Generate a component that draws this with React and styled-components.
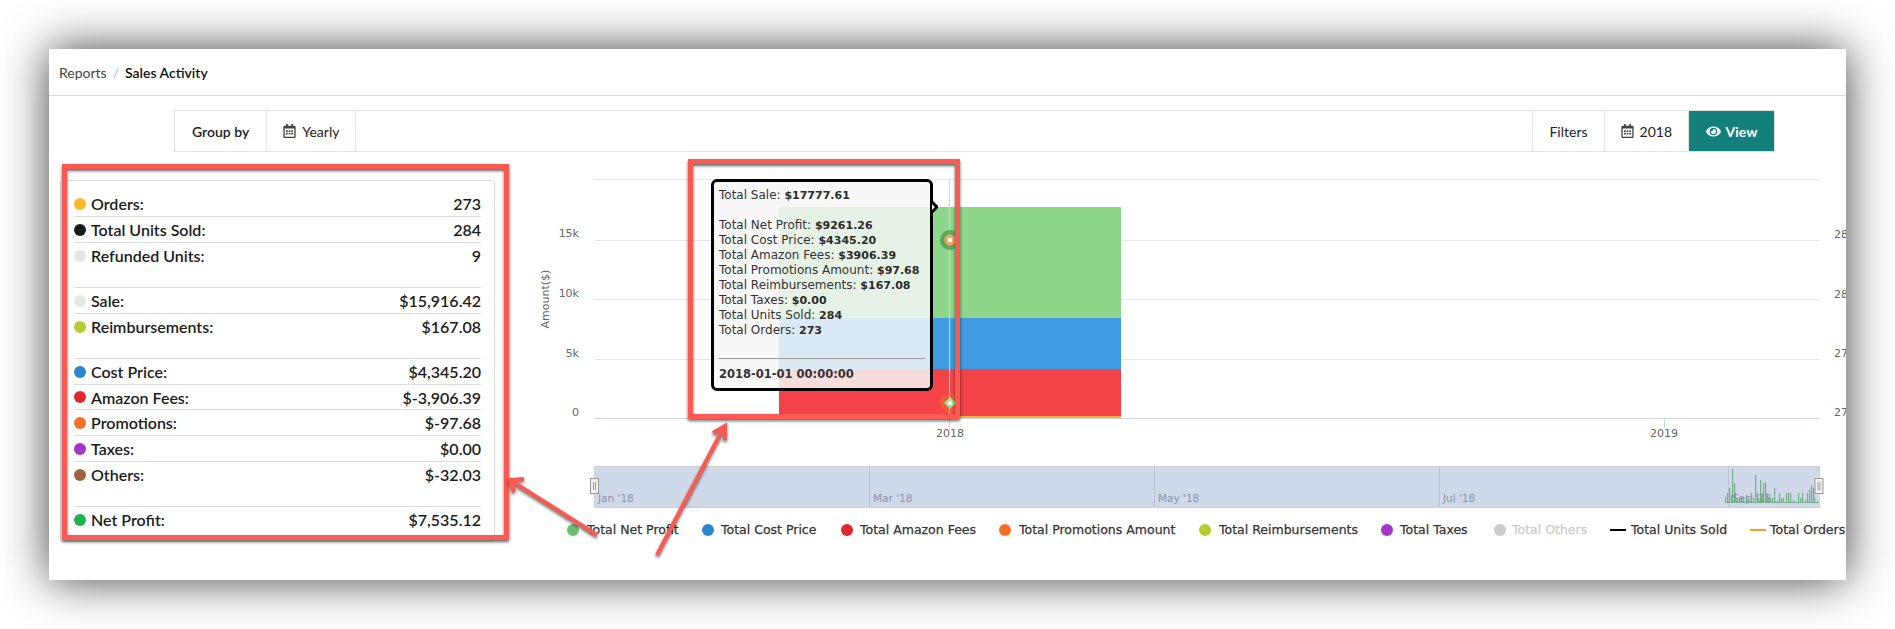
import React from "react";
import styled, { createGlobalStyle } from "styled-components";
import { FaRegCalendarAlt, FaEye } from "react-icons/fa";

const GlobalStyle = createGlobalStyle`
    body {
        margin: 0;
        background: #fff;
        font-family: "Lato", "Liberation Sans", sans-serif;
        color: #222;
    }
`

const statGroups = [
    [
        { label: "Orders:", value: "273", color: "#fdb827" },
        { label: "Total Units Sold:", value: "284", color: "#1b1b1e" },
        { label: "Refunded Units:", value: "9", color: "#e6e6e6" },
    ],
    [
        { label: "Sale:", value: "$15,916.42", color: "#e6e6e6" },
        { label: "Reimbursements:", value: "$167.08", color: "#b5cc2e" },
    ],
    [
        { label: "Cost Price:", value: "$4,345.20", color: "#2a86d1" },
        { label: "Amazon Fees:", value: "$-3,906.39", color: "#e0262f", tight: true },
        { label: "Promotions:", value: "$-97.68", color: "#f5702b" },
        { label: "Taxes:", value: "$0.00", color: "#a336c9" },
        { label: "Others:", value: "$-32.03", color: "#9f6340" },
    ],
    [
        { label: "Net Profit:", value: "$7,535.12", color: "#21b34d" },
    ],
];

const tooltipLines = [
    ["Total Net Profit", "$9261.26"],
    ["Total Cost Price", "$4345.20"],
    ["Total Amazon Fees", "$3906.39"],
    ["Total Promotions Amount", "$97.68"],
    ["Total Reimbursements", "$167.08"],
    ["Total Taxes", "$0.00"],
    ["Total Units Sold", "284"],
    ["Total Orders", "273"],
];

const legendItems = [
    { label: "Total Net Profit", mark: 573, text: 587, color: "#6cbf72" },
    { label: "Total Cost Price", mark: 708, text: 721, color: "#2a86d1" },
    { label: "Total Amazon Fees", mark: 847, text: 860, color: "#e0262f" },
    { label: "Total Promotions Amount", mark: 1005, text: 1019, color: "#f5702b" },
    { label: "Total Reimbursements", mark: 1205, text: 1219, color: "#b5cc2e" },
    { label: "Total Taxes", mark: 1387, text: 1400, color: "#a336c9" },
    { label: "Total Others", mark: 1500, text: 1512, color: "#cccccc", off: true },
    { label: "Total Units Sold", mark: 1618, text: 1631, color: "#000", line: true },
    { label: "Total Orders", mark: 1758, text: 1770, color: "#f7a024", line: true },
];

// [x offset from the left of the zoom, height of the spike]
const spikes = [
    [10, 5], [12, 9], [14, 14], [16, 7], [17, 33], [19, 19], [20, 9], [22, 4], [24, 5], [26, 5],
    [28, 4], [31, 7], [33, 4], [36, 9], [38, 4], [40, 27], [42, 9], [43, 4], [45, 22], [47, 9],
    [48, 19], [50, 20], [52, 9], [53, 5], [55, 4], [57, 4], [59, 14], [62, 2], [64, 9], [66, 4],
    [68, 4], [71, 9], [73, 9], [75, 9], [78, 2], [83, 9], [85, 4], [87, 9], [90, 2], [92, 9],
    [94, 12], [96, 17], [98, 14], [99, 4], [102, 1],
];

const Page = styled.div`
    box-sizing: border-box;
    height: 629px;
    padding: 49px 49px 0 49px;
    overflow: hidden;
`

const Window = styled.div`
    position: relative;
    width: 1797px;
    height: 531px;
    background: #fff;
    box-shadow: 0 0 44px rgba(0, 0, 0, 0.75);
    overflow: hidden;
`

const Header = styled.div`
    display: flex;
    align-items: center;
    gap: 6px;
    height: 46px;
    padding-left: 10px;
    border-bottom: 1px solid #d9d9d9;
    font-size: 14px;
`

const Crumb = styled.span`
    color: ${props => props.$current ? "#111" : "#444"};
    font-weight: ${props => props.$current ? 600 : 400};
`

const CrumbSep = styled.span`
    color: #bbb;
`

const Toolbar = styled.div`
    display: flex;
    height: 40px;
    margin: 14px 71px 0 125px;
    border: 1px solid #e0e0e0;
    font-size: 14px;
`

const ToolCell = styled.div`
    display: flex;
    align-items: center;
    gap: 6px;
    padding: 0 ${props => props.$pad || 15}px;
    border-right: 1px solid #e6e6e6;
    color: #222;
    font-weight: ${props => props.$bold ? 600 : 400};
`

const ToolSpacer = styled.div`
    flex: 1;
    border-right: 1px solid #e6e6e6;
`

const ViewButton = styled.div`
    display: flex;
    align-items: center;
    gap: 5px;
    width: 85px;
    justify-content: center;
    background: #14807c;
    color: #fff;
    font-weight: 700;
`

const CalIcon = styled(FaRegCalendarAlt)`
    width: 13px;
    height: 14px;
    color: #444;
`

const Body = styled.div`
    display: flex;
    height: 428px;
`

const StatCard = styled.div`
    box-sizing: border-box;
    width: 435px;
    height: 362px;
    margin: 28px 0 0 11px;
    padding: 10px 13px 0 13px;
    border: 1px solid #ddd;
    border-radius: 3px;
    flex-shrink: 0;
`

const StatGroup = styled.div`
    & + & {
        margin-top: 19px;
        border-top: 1px solid #ddd;
    }
`

const StatRow = styled.div`
    display: flex;
    align-items: center;
    height: ${props => props.$tight ? 24 : 25}px;
    border-bottom: 1px solid #ddd;
    font-size: 16px;
    font-weight: 600;
    color: #1c1c1c;

    &:last-child {
        border-bottom: none;
    }
`

const Dot = styled.span`
    width: 12px;
    height: 12px;
    margin-right: 5px;
    border-radius: 50%;
    background: ${props => props.$color};
`

const StatValue = styled.span`
    margin-left: auto;
`

const ChartCol = styled.div`
    position: relative;
    flex: 1;
`

const ChartSvg = styled.svg`
    display: block;
    font-family: "DejaVu Sans", sans-serif;
`

const LegendLabel = styled.text`
    font-size: 12.5px;
    stroke: currentColor;
    stroke-width: 0.25px;
    fill: currentColor;
    color: ${props => props.$off ? "#ccc" : "#333"};
`

const Tooltip = styled.div`
    position: absolute;
    left: 216px;
    top: 27px;
    box-sizing: border-box;
    width: 222px;
    height: 212px;
    padding: 6px 5px 0 5px;
    background: rgba(247, 247, 247, 0.85);
    border: 3px solid #000;
    border-radius: 6px;
    font-family: "DejaVu Sans", sans-serif;
    font-size: 12px;
    line-height: 15px;
    color: #333;

    b {
        font-size: 11px;
        font-weight: 700;
        color: #2b2b2b;
    }
`

const TipArrow = styled.svg`
    position: absolute;
    left: 431px;
    top: 49px;
`

const TipGap = styled.div`
    height: 15px;
`

const TipRule = styled.div`
    height: 1px;
    margin-top: 20px;
    background: #999;
`

const TipDate = styled.div`
    margin-top: 8px;
    font-size: 11.5px;
    font-weight: 700;
`

const Highlight = styled.div`
    position: absolute;
    left: ${props => props.$left}px;
    top: ${props => props.$top}px;
    width: ${props => props.$width}px;
    height: ${props => props.$height}px;
    box-sizing: border-box;
    border: 5px solid #fb5a52;
    box-shadow: 0 2px 3px rgba(0, 0, 0, 0.6), inset 0 2px 3px rgba(0, 0, 0, 0.6);
`

const ArrowLayer = styled.svg`
    position: absolute;
    left: 0;
    top: 0;
    pointer-events: none;
    filter: drop-shadow(0 2px 1.5px rgba(0, 0, 0, 0.55));
`

const Marker = ({ x, y, halo, fill, diamond }) => (
    <g>
        <circle cx={x} cy={y} r={10} fill={halo} fillOpacity={0.45} />
        {diamond
            ? <polygon points={`${x},${y - 6} ${x + 6},${y} ${x},${y + 6} ${x - 6},${y}`} fill={fill} />
            : <circle cx={x} cy={y} r={5.5} fill={fill} />}
        <rect x={x - 2} y={y - 2} width={4} height={4} fill="#fff" />
    </g>
)

const Chart = () => {
    const grid = [179, 240, 299, 359];
    const axisLeft = [["15k", 237], ["10k", 297], ["5k", 357], ["0", 416]];
    const axisRight = [["28", 238], ["28", 298], ["27", 357], ["27", 416]];
    const navTicks = [
        [594, "Jan '18"], [869, "Mar '18"], [1154, "May '18"], [1439, "Jul '18"], [1728, "Sep '18"],
    ];

    return (
        <ChartSvg width="1351" height="428" viewBox="495 152 1351 428">
            {grid.map(y => <rect key={y} x="594" y={y} width="1225" height="1" fill="#e6e6e6" />)}
            <rect x="594" y="418" width="1225" height="1" fill="#ccd6eb" />

            {axisLeft.map(([t, y]) => (
                <text key={t} x="579" y={y} fontSize="11" fill="#666" textAnchor="end">{t}</text>
            ))}
            {axisRight.map(([t, y], i) => (
                <text key={i} x="1834" y={y} fontSize="11" fill="#666">{t}</text>
            ))}
            <text x="0" y="0" fontSize="11" fill="#666" textAnchor="middle" transform="translate(549 299) rotate(-90)">Amount($)</text>

            <rect x="779" y="207" width="342" height="111" fill="#8ed68c" />
            <rect x="779" y="318" width="342" height="51" fill="#409ce4" />
            <rect x="779" y="369" width="342" height="47" fill="#f44348" />
            <rect x="779" y="416" width="342" height="2" fill="#f2b035" />

            <rect x="949" y="179" width="1" height="251" fill="#ccd6eb" />
            <rect x="1664" y="418" width="1" height="10" fill="#ccd6eb" />
            <text x="950" y="437" fontSize="11" fill="#666" textAnchor="middle">2018</text>
            <text x="1664" y="437" fontSize="11" fill="#666" textAnchor="middle">2019</text>

            <Marker x={950} y={240} halo="#1f6b22" fill="#f9a35c" />
            <Marker x={950} y={403} halo="#f5702b" fill="#8fe58c" diamond />

            <rect x="594.5" y="466.5" width="1225" height="41" fill="#d0d9ea" stroke="#cfcfcf" />
            {navTicks.slice(1).map(([x]) => <rect key={x} x={x} y="467" width="1" height="40" fill="#bcc5d8" />)}
            {spikes.map(([dx, h]) => (
                <rect key={dx} x={1725 + dx - 10} y={502 - h} width="1.2" height={h + 1} fill="#74b086" />
            ))}
            <rect x="1725" y="502" width="92" height="1" fill="#74b086" />
            {navTicks.map(([x, t]) => (
                <text key={t} x={x + 4} y="502" fontSize="10.5" fill="#8c93aa">{t}</text>
            ))}
            {[594.5, 1819].map(x => (
                <g key={x}>
                    <rect x={x - 4} y="478.5" width="8" height="15" fill="#f2f2f2" stroke="#999" />
                    <path d={`M${x - 1} 482v8M${x + 1} 482v8`} stroke="#999" fill="none" />
                </g>
            ))}

            {legendItems.map(item => (
                <g key={item.label}>
                    {item.line
                        ? <rect x={item.mark - 8} y="529" width="16" height="2" fill={item.color} />
                        : <circle cx={item.mark} cy="530" r="6" fill={item.color} />}
                    <LegendLabel x={item.text} y="534" $off={item.off}>{item.label}</LegendLabel>
                </g>
            ))}
        </ChartSvg>
    )
}

const App = () => {
    return (
        <Page>
            <GlobalStyle />
            <Window>
                <Header>
                    <Crumb>Reports</Crumb>
                    <CrumbSep>/</CrumbSep>
                    <Crumb $current>Sales Activity</Crumb>
                </Header>
                <Toolbar>
                    <ToolCell $bold $pad={17}>Group by</ToolCell>
                    <ToolCell $pad={16}><CalIcon />Yearly</ToolCell>
                    <ToolSpacer />
                    <ToolCell $pad={16}>Filters</ToolCell>
                    <ToolCell $pad={16}><CalIcon />2018</ToolCell>
                    <ViewButton><FaEye size={15} />View</ViewButton>
                </Toolbar>
                <Body>
                    <StatCard>
                        {statGroups.map((group, i) => (
                            <StatGroup key={i}>
                                {group.map(row => (
                                    <StatRow key={row.label} $tight={row.tight}>
                                        <Dot $color={row.color} />
                                        {row.label}
                                        <StatValue>{row.value}</StatValue>
                                    </StatRow>
                                ))}
                            </StatGroup>
                        ))}
                    </StatCard>
                    <ChartCol>
                        <Chart />
                        <Tooltip>
                            <div>Total Sale: <b>$17777.61</b></div>
                            <TipGap />
                            {tooltipLines.map(([k, v]) => (
                                <div key={k}>{k}: <b>{v}</b></div>
                            ))}
                            <TipRule />
                            <TipDate>2018-01-01 00:00:00</TipDate>
                        </Tooltip>
                        <TipArrow width="12" height="12" viewBox="0 0 12 12">
                            <path d="M6 1L11 6L6 11" fill="#e6f0e4" stroke="#000" strokeWidth="3" />
                        </TipArrow>
                    </ChartCol>
                </Body>
                <Highlight $left={13} $top={115} $width={447} $height={376} />
                <Highlight $left={639} $top={110} $width={272} $height={260} />
                <ArrowLayer width="1797" height="531" viewBox="49 49 1797 531">
                    <path d="M597 535L510 480M524 479L510 480L514 492" fill="none" stroke="#fb5a52" strokeWidth="4" />
                    <path d="M657 555L724 427M713 433L725 426L725 440" fill="none" stroke="#fb5a52" strokeWidth="4" />
                </ArrowLayer>
            </Window>
        </Page>
    )
}

export default App;
